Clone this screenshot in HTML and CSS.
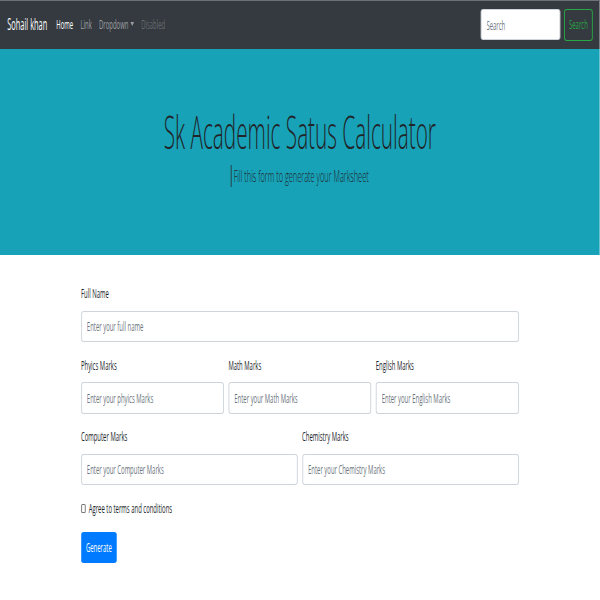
FILE: index.html
```html
<!DOCTYPE html>
<html lang="en">
<head>
<meta charset="utf-8">
<title>Sk Academic Satus Calculator</title>
<link rel="stylesheet" href="styles.css">
</head>
<body>
<div class="frame">
<div class="page">
  <nav class="navbar">
    <a class="brand" href="#">Sohail khan</a>
    <ul class="nav">
      <li><a class="nav-link active" href="#">Home</a></li>
      <li><a class="nav-link" href="#">Link</a></li>
      <li><a class="nav-link" href="#">Dropdown<span class="caret"></span></a></li>
      <li><a class="nav-link disabled" href="#">Disabled</a></li>
    </ul>
    <form class="search">
      <input class="search-input" type="search" placeholder="Search">
      <button class="btn-outline-success" type="button">Search</button>
    </form>
  </nav>

  <header class="jumbotron">
    <h1 class="display">Sk Academic Satus Calculator</h1>
    <p class="lead"><span class="cursor"></span>Fill this form to generate your Marksheet</p>
  </header>

  <main class="container">
    <form>
      <div class="form-group">
        <label>Full Name</label>
        <input class="form-control" type="text" placeholder="Enter your full name">
      </div>
      <div class="form-row cols-3">
        <div class="form-group">
          <label>Phyics Marks</label>
          <input class="form-control" type="text" placeholder="Enter your phyics Marks">
        </div>
        <div class="form-group">
          <label>Math Marks</label>
          <input class="form-control" type="text" placeholder="Enter your Math Marks">
        </div>
        <div class="form-group">
          <label>English Marks</label>
          <input class="form-control" type="text" placeholder="Enter your English Marks">
        </div>
      </div>
      <div class="form-row cols-2">
        <div class="form-group">
          <label>Computer Marks</label>
          <input class="form-control" type="text" placeholder="Enter your Computer Marks">
        </div>
        <div class="form-group">
          <label>Chemistry Marks</label>
          <input class="form-control" type="text" placeholder="Enter your Chemistry Marks">
        </div>
      </div>
      <div class="form-check">
        <input class="check-input" type="checkbox" id="agree">
        <label class="check-label" for="agree">Agree to terms and conditions</label>
      </div>
      <button class="btn-primary" type="button">Generate</button>
    </form>
  </main>
</div>
</div>
</body>
</html>
```

FILE: styles.css
```css
* {
  box-sizing: border-box;
}

html,
body {
  margin: 0;
  padding: 0;
  background: #fff;
  overflow: hidden;
}

.frame {
  width: 600px;
  height: 600px;
  overflow: hidden;
}

.page {
  width: 1315px;
  transform: scaleX(0.456);
  transform-origin: 0 0;
  font-family: "Open Sans", "Liberation Sans", sans-serif;
  font-size: 13px;
  line-height: 1.5;
  color: #212529;
}

/* Navbar */
.navbar {
  display: flex;
  align-items: center;
  height: 49px;
  padding: 8px 15px 9px 16px;
  background: #343a40;
  border-top: 1px solid #6d7075;
}

.brand {
  font-size: 16.25px;
  color: #fff;
  text-decoration: none;
  margin-right: 12px;
}

.nav {
  display: flex;
  list-style: none;
  margin: 0;
  padding: 0;
}

.nav-link {
  display: block;
  padding: 0 8px;
  color: rgba(255, 255, 255, 0.5);
  text-decoration: none;
}

.nav-link.active {
  color: #fff;
}

.nav-link.disabled {
  color: rgba(255, 255, 255, 0.25);
}

.caret {
  display: inline-block;
  margin-left: 4px;
  vertical-align: 3px;
  border-top: 4px solid;
  border-left: 4px solid transparent;
  border-right: 4px solid transparent;
}

.search {
  display: flex;
  align-items: center;
  margin: 0 0 0 auto;
}

.search-input {
  width: 175px;
  height: 31px;
  margin-right: 8px;
  padding: 0 11px;
  border: solid #ced4da;
  border-width: 1px 2px;
  border-radius: 6px / 3px;
  background: #fff;
  font: inherit;
  color: #495057;
}

.search-input::placeholder {
  color: #6c757d;
  opacity: 1;
}

.btn-outline-success {
  height: 32px;
  padding: 0 9px;
  border: solid #28a745;
  border-width: 1px 2px;
  border-radius: 6px / 3px;
  background: transparent;
  color: #28a745;
  font: inherit;
}

/* Jumbotron */
.jumbotron {
  height: 206px;
  padding-top: 55px;
  background: #17a2b8;
  text-align: center;
}

.display {
  margin: 0 0 5px;
  font-size: 45.5px;
  font-weight: 300;
  line-height: 1.2;
  color: #212529;
}

.lead {
  margin: 0;
  font-size: 16.25px;
  font-weight: 300;
  line-height: 1.5;
  color: #212529;
}

.cursor {
  display: inline-block;
  height: 22px;
  border-left: 2px solid #2a3b42;
  vertical-align: -5px;
  margin-right: 4px;
}

/* Form */
.container {
  width: 960px;
  margin: 29px auto 0;
}

.container form {
  margin: 0;
}

.form-group {
  margin-bottom: 13.5px;
}

.form-group label {
  display: block;
  margin-bottom: 7px;
  line-height: 19.5px;
}

.form-control {
  display: block;
  width: 100%;
  height: 31.5px;
  padding: 0 11px;
  border: solid #ced4da;
  border-width: 1px 2px;
  border-radius: 6px / 3px;
  background: #fff;
  font: inherit;
  color: #495057;
}

.form-control::placeholder {
  color: #6c757d;
  opacity: 1;
}

.form-row {
  display: grid;
  column-gap: 10px;
}

.cols-3 {
  grid-template-columns: repeat(3, 1fr);
}

.cols-2 {
  grid-template-columns: repeat(2, 1fr);
}

.form-check {
  display: flex;
  align-items: center;
  margin-bottom: 13.5px;
  line-height: 19.5px;
}

.check-input {
  appearance: none;
  -webkit-appearance: none;
  width: 10px;
  height: 9px;
  margin: 0 7px 0 0;
  border: solid #767676;
  border-width: 1px 2px;
  border-radius: 3px / 1.5px;
  background: #fff;
}

.btn-primary {
  height: 31.5px;
  padding: 0 10px;
  border: 1px solid #007bff;
  border-radius: 6px / 3px;
  background: #007bff;
  color: #fff;
  font: inherit;
}
```
